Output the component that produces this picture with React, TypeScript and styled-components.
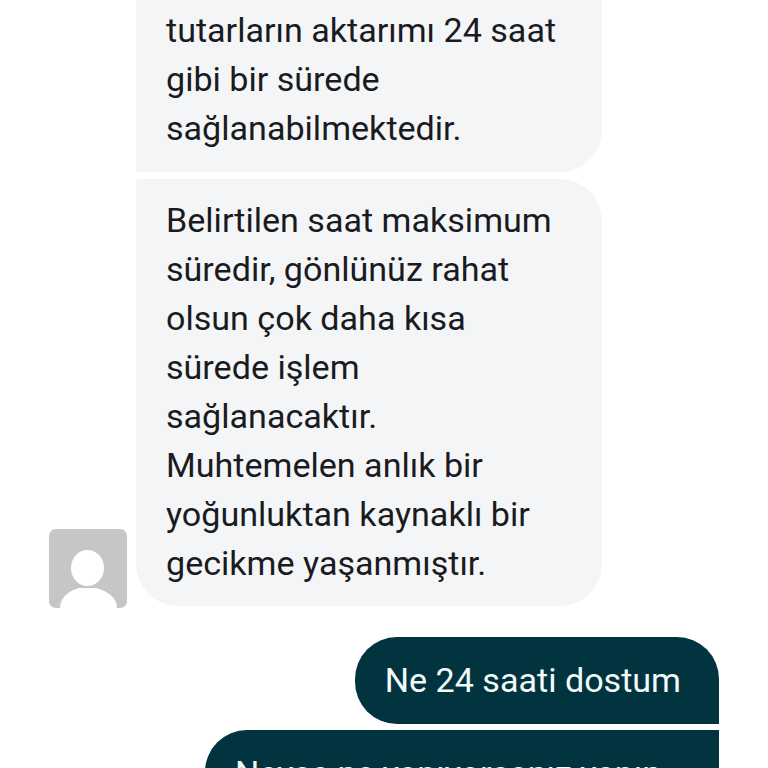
import React from 'react'
import styled, { createGlobalStyle } from 'styled-components'

const GlobalStyle = createGlobalStyle`
  html, body {
    margin: 0;
    padding: 0;
    height: 100%;
    background: #fff;
  }
`

const Screen = styled.div`
  width: 768px;
  height: 768px;
  overflow: hidden;
  background: #fff;
  font-family: Roboto, 'Liberation Sans', sans-serif;
  font-size: 34.1px;
  line-height: 49px;
`

const Thread = styled.div`
  display: flex;
  flex-direction: column;
  margin-top: -60px;
  padding: 0 49px;
`

const IncomingGroup = styled.div`
  display: flex;
  align-items: flex-end;
  gap: 9px;
`

const AvatarBox = styled.div`
  flex: none;
  width: 78px;
  height: 79px;
  margin-bottom: -2px;
  border-radius: 7px;
  overflow: hidden;
  background: #c6c6c6;

  svg {
    display: block;
  }
`

const IncomingStack = styled.div`
  display: flex;
  flex-direction: column;
  gap: 6.5px;
  width: 466px;
`

const IncomingBubble = styled.div<{ $first?: boolean }>`
  box-sizing: border-box;
  padding: ${props => (props.$first ? '66px 42px 19px 30px' : '17.5px 42px 18px 30px')};
  background: #f4f5f7;
  color: #191b1e;
  border-radius: ${props => (props.$first ? '0 42px 42px 0' : '4px 42px 42px 42px')};
`

const OutgoingStack = styled.div`
  display: flex;
  flex-direction: column;
  align-items: flex-end;
  gap: 6px;
  margin-top: 31px;
`

const OutgoingBubble = styled.div<{ $minWidth?: number; $continued?: boolean }>`
  box-sizing: border-box;
  min-width: ${props => (props.$minWidth ? `${props.$minWidth}px` : '0')};
  padding: 18.5px 38px 19.5px 30px;
  background: #02343f;
  color: #f2fafa;
  border-radius: ${props => (props.$continued ? '42px 0 0 42px' : '42px 42px 0 42px')};
  white-space: nowrap;
`

const Avatar = () => (
  <AvatarBox>
    <svg width="78" height="79" viewBox="0 0 78 79">
      <ellipse cx="38.5" cy="39" rx="16.5" ry="18" fill="#fff" />
      <path d="M11 79C11 68 20 62 30 59L47 59C58 62 68 68 68 79Z" fill="#fff" />
    </svg>
  </AvatarBox>
)

export default function App() {
  return (
    <>
      <GlobalStyle />
      <Screen>
        <Thread>
          <IncomingGroup>
            <Avatar />
            <IncomingStack>
              <IncomingBubble $first>
                tutarların aktarımı 24 saat gibi bir sürede sağlanabilmektedir.
              </IncomingBubble>
              <IncomingBubble>
                Belirtilen saat maksimum süredir, gönlünüz rahat olsun çok daha kısa sürede işlem
                sağlanacaktır.
                <br />
                Muhtemelen anlık bir yoğunluktan kaynaklı bir gecikme yaşanmıştır.
              </IncomingBubble>
            </IncomingStack>
          </IncomingGroup>
          <OutgoingStack>
            <OutgoingBubble>Ne 24 saati dostum</OutgoingBubble>
            <OutgoingBubble $minWidth={514} $continued>
              Neyse ne yapıyorsanız yapın
            </OutgoingBubble>
          </OutgoingStack>
        </Thread>
      </Screen>
    </>
  )
}
